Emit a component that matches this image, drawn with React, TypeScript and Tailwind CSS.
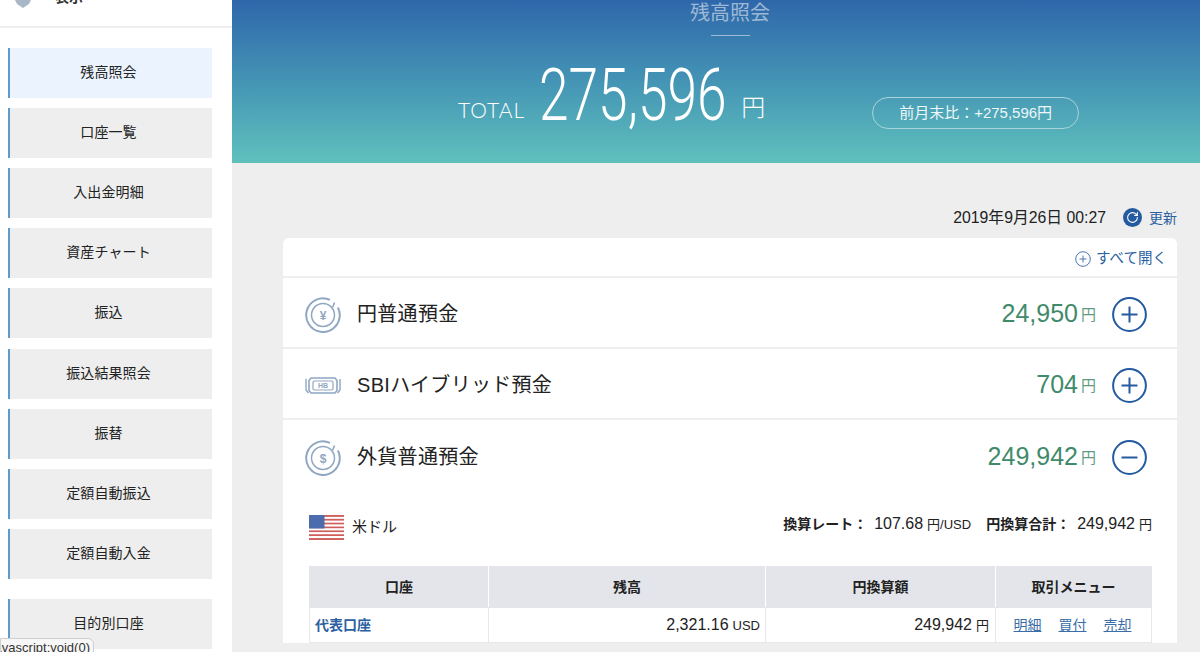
import { RotateCw } from 'lucide-react'

const MENU = ['口座一覧', '入出金明細', '資産チャート', '振込', '振込結果照会', '振替', '定額自動振込', '定額自動入金']

function MenuItem({ label, active }: { label: string; active?: boolean }) {
  return (
    <a
      className={`flex h-[50px] items-center justify-center border-l-2 border-[#5a9bd0] pb-[2px] pr-[5px] text-sm tracking-[0.1px] text-[#222] ${
        active ? 'bg-[#ebf3fe]' : 'bg-[#eeeeee]'
      }`}
    >
      {label}
    </a>
  )
}

function CoinIcon({ mark }: { mark: string }) {
  return (
    <svg viewBox="0 0 36 36" className="h-9 w-9 shrink-0" fill="none" stroke="#8fa7c2" strokeWidth="2">
      <path d="M25 2.800A16.800 16.800 0 1 0 34.800 18c0-2.800-.7-5.400-1.900-7.600" />
      <path d="M29.500 5.500l-1.800 4.700" strokeWidth="1.600" />
      <circle cx="18" cy="18" r="11.500" strokeWidth="1.500" />
      <text x="18" y="22.500" textAnchor="middle" fontSize="12" fontWeight="700" fill="#8fa7c2" stroke="none">
        {mark}
      </text>
    </svg>
  )
}

function HybridIcon() {
  return (
    <svg viewBox="0 0 38 17" className="h-[17px] w-[38px] shrink-0" fill="none" stroke="#8fa7c2" strokeWidth="1.600">
      <path d="M7 1h24l2 2.500v10L31 16H7l-2-2.500v-10z" />
      <path d="M2 2v11l2.500 3M36 2v11l-2.500 3" strokeWidth="1.400" />
      <rect x="9" y="4" width="20" height="9" rx="1.500" strokeWidth="1.200" />
      <text x="19" y="11" textAnchor="middle" fontSize="7" fontWeight="700" fill="#8fa7c2" stroke="none">
        HB
      </text>
    </svg>
  )
}

function ToggleButton({ open }: { open?: boolean }) {
  return (
    <svg viewBox="0 0 35 35" className="h-[35px] w-[35px] shrink-0" fill="none" stroke="#245a9f" strokeWidth="2">
      <circle cx="17.500" cy="17.500" r="16.400" />
      <path d="M9.500 17.500h16" />
      {!open && <path d="M17.500 9.500v16" />}
    </svg>
  )
}

function AccountRow({ icon, label, amount, open }: { icon: React.ReactNode; label: string; amount: string; open?: boolean }) {
  return (
    <div className="flex h-[69px] items-center pl-[21px] pr-[30px] pt-[4px]">
      <div className="flex w-[38px] justify-center">{icon}</div>
      <span className="ml-[15px] mb-[2px] text-xl tracking-[0.3px] text-[#222]">{label}</span>
      <span className="ml-auto mb-[2px] text-[25px] text-[#3f8a6b]">{amount}</span>
      <span className="ml-[3px] mt-[1px] text-[15px] text-[#5f9a82]">円</span>
      <span className="ml-[16px]">
        <ToggleButton open={open} />
      </span>
    </div>
  )
}

function UsFlag() {
  const stripes = [0, 1, 2, 3, 4, 5, 6, 7, 8, 9, 10, 11, 12]
  return (
    <svg viewBox="0 0 35 25" className="h-[25px] w-[35px]">
      {stripes.map((i) => (
        <rect key={i} y={(i * 25) / 13} width="35" height={25 / 13} fill={i % 2 === 0 ? '#cf5f5c' : '#ffffff'} />
      ))}
      <rect width="15.500" height="13.500" fill="#4c6cae" />
    </svg>
  )
}

export default function App() {
  return (
    <div className="relative flex h-[652px] w-[1200px] overflow-hidden bg-[#eeeeee] font-['Liberation_Sans','Noto_Sans_CJK_JP',sans-serif]">
      <aside className="h-full w-[232px] shrink-0 bg-white">
        <div className="flex h-[28px] items-start border-b-2 border-[#eeeeee] pl-[15px]">
          <svg viewBox="0 0 16 8" className="h-2 w-4" fill="#a9b8c6">
            <path d="M0 0h16l-2 4-6 4-6-4z" />
          </svg>
          <span className="ml-[24px] mt-[-11px] text-sm font-bold leading-4 text-[#333]">表示</span>
        </div>
        <nav className="flex flex-col gap-[10.12px] pl-[8px] pr-[20px] pt-[20px]">
          <MenuItem label="残高照会" active />
          {MENU.map((m) => (
            <MenuItem key={m} label={m} />
          ))}
          <div className="mt-[10px]">
            <MenuItem label="目的別口座" />
          </div>
        </nav>
      </aside>

      <main className="min-w-0 flex-1">
        <header className="relative flex h-[163px] flex-col items-center bg-gradient-to-b from-[#2f67aa] to-[#5fc1bc]">
          <h1 className="ml-[28px] mt-[-1px] text-xl leading-7 text-[#9db9d6]">残高照会</h1>
          <div className="ml-[28px] mt-[8px] h-px w-[39px] bg-[#9db9d6]" />
          <div className="mt-[20px] flex h-[80px] w-full items-start pl-[226px] text-white">
            <span className="mt-[38px] font-['Lato',sans-serif] text-[21px] font-light tracking-[1px]">TOTAL</span>
            <span className="ml-[14px] mt-[2px] w-[184px] shrink-0 origin-left scale-x-[0.74] whitespace-nowrap font-['Roboto',sans-serif] text-[72px] font-light leading-[76px]">
              275,596
            </span>
            <span className="ml-[18px] mt-[36px] text-2xl font-light">円</span>
            <span className="ml-[107px] mt-[41px] flex h-[32px] w-[207px] items-center justify-center rounded-full border border-[#a9d3da] text-[15px] text-[#eef7f8]">
              前月末比：+275,596円
            </span>
          </div>
        </header>

        <div className="pl-[51px] pr-[23px] pt-[44px]">
          <div className="flex h-[21px] items-center justify-end text-[#222]">
            <span className="text-[15.8px]">2019年9月26日 00:27</span>
            <span className="ml-[17px] flex h-[19px] w-[19px] items-center justify-center rounded-full bg-[#245a9f]">
              <RotateCw size={13} color="#ffffff" strokeWidth={2} />
            </span>
            <span className="ml-[7px] text-sm text-[#2c5f9f]">更新</span>
          </div>

          <section className="mt-[10px] rounded-t-md bg-white">
            <div className="flex h-[40px] items-center justify-end border-b-2 border-[#eeeeee] pr-[10px] pt-[3px] text-[14.5px] text-[#2c5f9f]">
              <svg viewBox="0 0 16 16" className="mr-[5px] h-4 w-4" fill="none" stroke="#4a79b0" strokeWidth="1">
                <circle cx="8" cy="8" r="7.300" />
                <path d="M4.500 8h7M8 4.500v7" />
              </svg>
              すべて開く
            </div>
            <div className="border-b-2 border-[#eeeeee]">
              <AccountRow icon={<CoinIcon mark="¥" />} label="円普通預金" amount="24,950" />
            </div>
            <div className="border-b-2 border-[#eeeeee]">
              <AccountRow icon={<HybridIcon />} label="SBIハイブリッド預金" amount="704" />
            </div>
            <div className="pt-[1px]">
              <AccountRow icon={<CoinIcon mark="$" />} label="外貨普通預金" amount="249,942" open />
            </div>

            <div className="pl-[26px] pr-[25px] pt-[17px]">
              <div className="flex h-[40px] items-center text-[#222]">
                <UsFlag />
                <span className="ml-[8px] mt-[1px] text-[15px]">米ドル</span>
                <div className="mb-[6px] ml-auto flex items-baseline text-sm">
                  <b className="font-bold">換算レート：</b>
                  <span className="ml-[7px] text-base">107.68</span>
                  <span className="ml-[4px] text-[13px]">円/USD</span>
                  <b className="ml-[15px] font-bold">円換算合計：</b>
                  <span className="ml-[7px] text-base">249,942</span>
                  <span className="ml-[4px] text-[13px]">円</span>
                </div>
              </div>

              <table className="mt-[19px] w-[842px] table-fixed border-collapse text-sm text-[#222]">
                <colgroup>
                  <col className="w-[179px]" />
                  <col className="w-[277px]" />
                  <col className="w-[230px]" />
                  <col className="w-[156px]" />
                </colgroup>
                <thead>
                  <tr className="h-[41px] bg-[#e3e5ea] font-bold">
                    <th className="border border-[#e3e5ea] border-r-white">口座</th>
                    <th className="border border-[#e3e5ea] border-r-white">残高</th>
                    <th className="border border-[#e3e5ea] border-r-white">円換算額</th>
                    <th className="border border-[#e3e5ea]">取引メニュー</th>
                  </tr>
                </thead>
                <tbody>
                  <tr className="h-[35px]">
                    <td className="border border-[#e6e8ec] pl-[5px] font-bold text-[#2c5f9f]">代表口座</td>
                    <td className="border border-[#e6e8ec] pr-[5px] text-right">
                      <span className="text-base">2,321.16</span>
                      <span className="ml-[4px] text-[13px]">USD</span>
                    </td>
                    <td className="border border-[#e6e8ec] pr-[6px] text-right">
                      <span className="text-base">249,942</span>
                      <span className="ml-[4px] text-[13px]">円</span>
                    </td>
                    <td className="border border-[#e6e8ec] pr-[2px] text-center text-[#3a6ea8]">
                      <div className="flex justify-center gap-[17px]">
                        <a className="underline">明細</a>
                        <a className="underline">買付</a>
                        <a className="underline">売却</a>
                      </div>
                    </td>
                  </tr>
                </tbody>
              </table>
            </div>
          </section>
        </div>
      </main>

      <div className="absolute bottom-[-5px] left-0 flex h-[19px] w-[94px] items-center justify-end overflow-hidden rounded-tr-md border border-[#cfcfcf] bg-[#f7f7f7] pr-[3px] text-[13px] whitespace-nowrap text-[#333]">
        javascript:void(0)
      </div>
    </div>
  )
}
